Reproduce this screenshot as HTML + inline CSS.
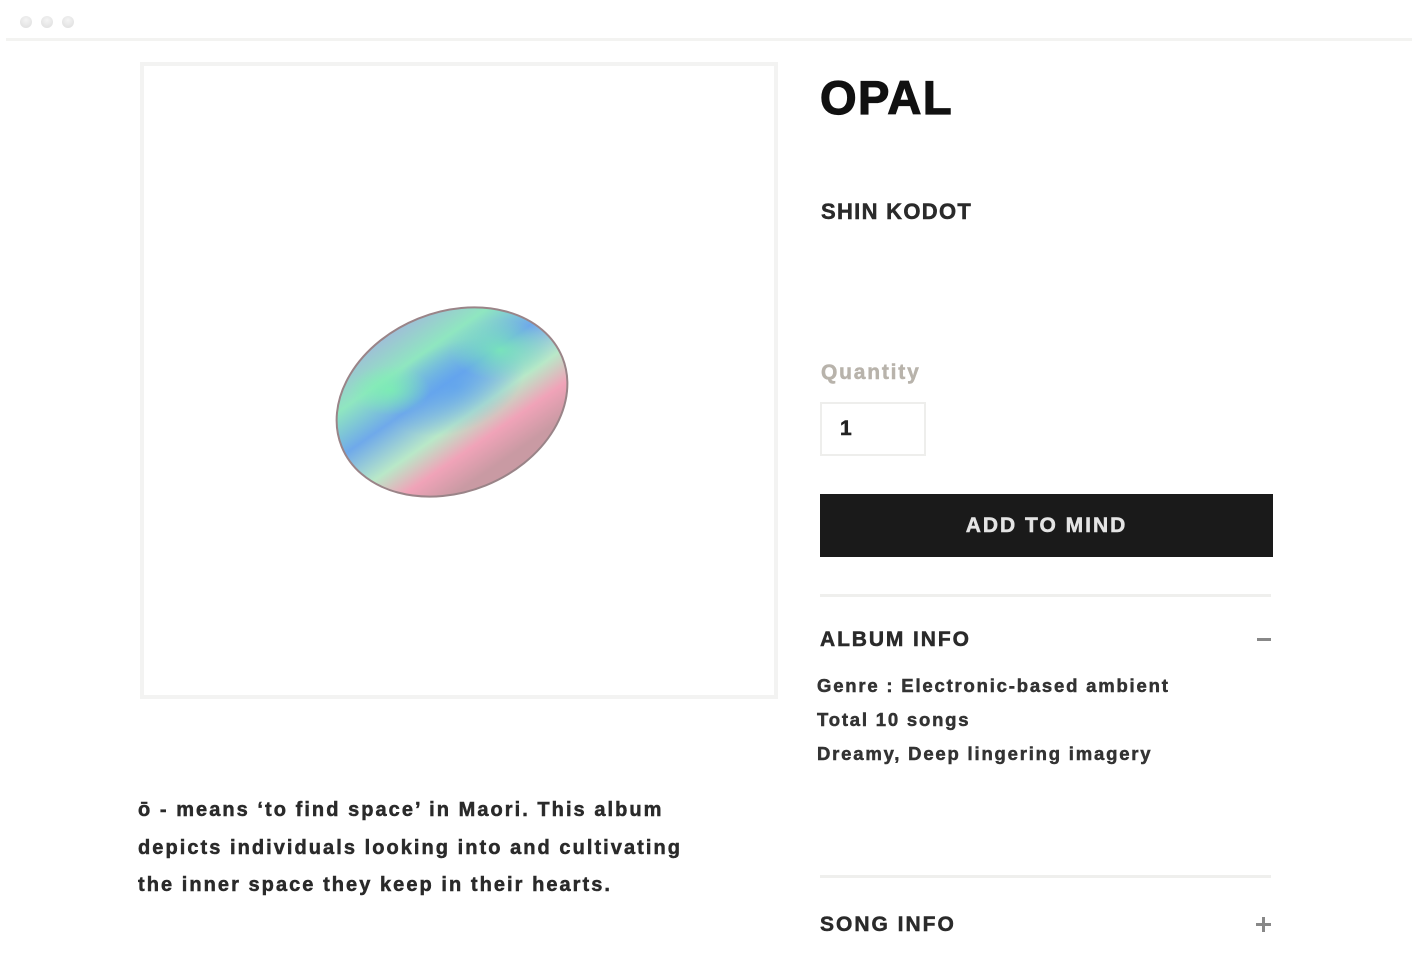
<!DOCTYPE html>
<html><head><meta charset="utf-8"><style>
*{margin:0;padding:0;box-sizing:border-box}
body{width:1418px;height:979px;background:#fff;font-family:"Liberation Sans",Arial,sans-serif;font-weight:bold;color:#2a2a2a;position:relative;overflow:hidden}
.a{position:absolute}
.t{-webkit-text-stroke:0.5px currentColor}
.dot{width:12px;height:12px;border-radius:50%;background:radial-gradient(circle at 50% 35%,#f4f4f4,#dcdcdc);top:16px}
</style></head><body>
<div class="a dot" style="left:20px"></div>
<div class="a dot" style="left:41px"></div>
<div class="a dot" style="left:62px"></div>
<div class="a" style="left:6px;top:38px;width:1406px;height:3px;background:#f3f3f1"></div>
<div class="a" style="left:140px;top:62px;width:638px;height:637px;border:4px solid #f3f3f2"></div>
<svg class="a" style="left:320px;top:290px" width="270" height="220" viewBox="320 290 270 220">
<defs>
<linearGradient id="g1" x1="0" y1="0" x2="0.3" y2="1">
<stop offset="0" stop-color="#a9a6e6"/><stop offset="0.3" stop-color="#8fe6c0"/><stop offset="0.5" stop-color="#6fa9ea"/><stop offset="0.7" stop-color="#b9e8c8"/><stop offset="0.85" stop-color="#f0a3b8"/><stop offset="1" stop-color="#c99aa3"/>
</linearGradient>
<radialGradient id="g2" cx="0.55" cy="0.45" r="0.4"><stop offset="0" stop-color="#5aa0f0" stop-opacity="0.7"/><stop offset="1" stop-color="#5aa0f0" stop-opacity="0"/></radialGradient>
<radialGradient id="g3" cx="0.5" cy="0.5" r="0.5"><stop offset="0" stop-color="#7af0b0" stop-opacity="0.8"/><stop offset="1" stop-color="#7af0b0" stop-opacity="0"/></radialGradient>
</defs>
<ellipse cx="452" cy="402" rx="119" ry="90" transform="rotate(-22 452 402)" fill="url(#g1)" stroke="#9a8488" stroke-width="2"/>
<ellipse cx="452" cy="395" rx="90" ry="55" transform="rotate(-22 452 402)" fill="url(#g2)"/>
<ellipse cx="500" cy="350" rx="50" ry="30" fill="url(#g3)"/>
<ellipse cx="390" cy="390" rx="40" ry="25" fill="url(#g3)"/>
</svg>
<div class="a t" style="left:820px;top:70px;font-size:47px;font-weight:900;color:#111;letter-spacing:1.5px;-webkit-text-stroke:1.2px #111">OPAL</div>
<div class="a t" style="left:821px;top:199px;font-size:22px;letter-spacing:1.3px">SHIN KODOT</div>
<div class="a t" style="left:821px;top:361px;font-size:21px;color:#b8b3ab;letter-spacing:1.8px">Quantity</div>
<div class="a t" style="left:820px;top:402px;width:106px;height:54px;border:2px solid #eeeeec;font-size:21px;padding:13px 0 0 18px;color:#222">1</div>
<div class="a t" style="left:820px;top:494px;width:453px;height:63px;background:#1a1a1a;color:#e4e4e4;font-size:21px;letter-spacing:2px;text-align:center;line-height:63px">ADD TO MIND</div>
<div class="a" style="left:820px;top:594px;width:451px;height:3px;background:#efefed"></div>
<div class="a t" style="left:820px;top:628px;font-size:21px;letter-spacing:1.9px">ALBUM INFO</div>
<div class="a" style="left:1257px;top:638px;width:14px;height:3px;background:#888"></div>
<div class="a t" style="left:817px;top:669px;font-size:18.5px;line-height:34px;color:#333;letter-spacing:1.8px">Genre : Electronic-based ambient<br>Total 10 songs<br>Dreamy, Deep lingering imagery</div>
<div class="a" style="left:820px;top:875px;width:451px;height:3px;background:#efefed"></div>
<div class="a t" style="left:820px;top:913px;font-size:21px;letter-spacing:2px">SONG INFO</div>
<div class="a" style="left:1262px;top:917px;width:3px;height:15px;background:#888"></div>
<div class="a" style="left:1256px;top:923px;width:15px;height:3px;background:#888"></div>
<div class="a t" style="left:138px;top:792px;font-size:20px;line-height:37.5px;letter-spacing:2.05px;color:#2a2a2a">ō - means ‘to find space’ in Maori. This album<br>depicts individuals looking into and cultivating<br>the inner space they keep in their hearts.</div>
</body></html>
